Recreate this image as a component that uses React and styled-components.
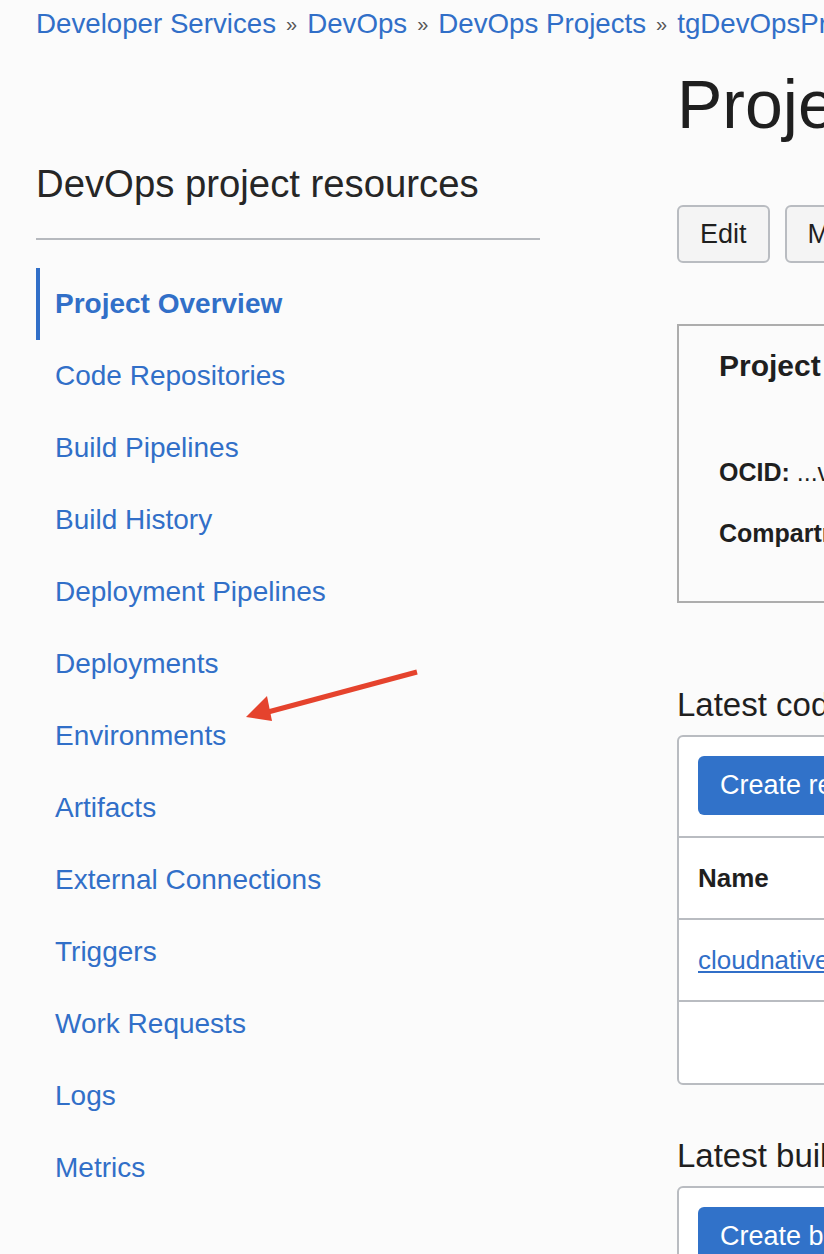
import React from "react";
import styled, { createGlobalStyle } from "styled-components";

const GlobalStyle = createGlobalStyle`
  html, body {
    margin: 0;
    padding: 0;
    background: #fbfbfb;
    overflow: hidden;
  }
  body {
    font-family: "Liberation Sans", Arial, sans-serif;
    color: #1f1f1f;
  }
`;

const navItems = [
  "Project Overview",
  "Code Repositories",
  "Build Pipelines",
  "Build History",
  "Deployment Pipelines",
  "Deployments",
  "Environments",
  "Artifacts",
  "External Connections",
  "Triggers",
  "Work Requests",
  "Logs",
  "Metrics",
];

const crumbs = ["Developer Services", "DevOps", "DevOps Projects", "tgDevOpsProject"];

export default function App() {
  return (
    <>
      <GlobalStyle />
      <Page>
        <Breadcrumbs>
          {crumbs.map((c, i) => (
            <React.Fragment key={c}>
              {i > 0 && <Sep>»</Sep>}
              <Crumb href="#">{c}</Crumb>
            </React.Fragment>
          ))}
        </Breadcrumbs>

        <Columns>
          <Sidebar>
            <SideTitle>DevOps project resources</SideTitle>
            <Divider />
            <Nav>
              {navItems.map((item, i) => (
                <NavItem key={item} $active={i === 0}>
                  <a href="#">{item}</a>
                </NavItem>
              ))}
            </Nav>
          </Sidebar>

          <Main>
            <PageTitle>Project Overview</PageTitle>
            <Actions>
              <Button>Edit</Button>
              <Button>Move resource</Button>
              <Button>Add tags</Button>
            </Actions>

            <InfoCard>
              <InfoTitle>Project information</InfoTitle>
              <InfoLine>
                <b>OCID:</b> ...vq7a5a <CopyLink>Show</CopyLink>
              </InfoLine>
              <InfoLine>
                <b>Compartment:</b> tgdevops
              </InfoLine>
            </InfoCard>

            <SectionTitle>Latest code repositories</SectionTitle>
            <TableCard>
              <Toolbar>
                <PrimaryButton>Create repository</PrimaryButton>
              </Toolbar>
              <Row $head>Name</Row>
              <Row>
                <TableLink href="#">cloudnative-helidon-storefront</TableLink>
              </Row>
              <EmptyRow />
            </TableCard>

            <SectionTitle $top={51}>Latest build pipelines</SectionTitle>
            <TableCard>
              <Toolbar>
                <PrimaryButton>Create build pipeline</PrimaryButton>
              </Toolbar>
            </TableCard>
          </Main>
        </Columns>

        <Arrow width="176" height="60" viewBox="0 0 176 60">
          <line x1="171" y1="9" x2="22" y2="49" stroke="#e5432d" strokeWidth="5" />
          <polygon points="0,54 21,33 26,58" fill="#e5432d" />
        </Arrow>
      </Page>
    </>
  );
}

const Page = styled.div`
  position: relative;
  width: 1400px;
  padding: 9px 0 0 36px;
`;

const Breadcrumbs = styled.div`
  display: flex;
  align-items: center;
  gap: 10px;
  font-size: 27.7px;
  line-height: 30px;
  white-space: nowrap;
`;

const Crumb = styled.a`
  color: #316fc8;
  text-decoration: none;
`;

const Sep = styled.span`
  color: #555;
  font-size: 20px;
`;

const Columns = styled.div`
  display: flex;
  gap: 137px;
`;

const Sidebar = styled.div`
  width: 504px;
  flex-shrink: 0;
  padding-top: 122px;
`;

const SideTitle = styled.h2`
  margin: 0;
  font-size: 38.3px;
  font-weight: 400;
  line-height: 46px;
  color: #262626;
`;

const Divider = styled.hr`
  border: 0;
  border-top: 2px solid #b6b9be;
  margin: 31px 0 28px;
`;

const Nav = styled.ul`
  list-style: none;
  margin: 0;
  padding: 0;
`;

const NavItem = styled.li`
  height: 72px;
  display: flex;
  align-items: center;
  padding-left: ${(p) => (p.$active ? "15px" : "19px")};
  border-left: ${(p) => (p.$active ? "4px solid #316fc8" : "0")};
  font-size: 28px;

  a {
    color: #316fc8;
    text-decoration: none;
    font-weight: ${(p) => (p.$active ? 700 : 400)};
  }
`;

const Main = styled.div`
  width: 720px;
  flex-shrink: 0;
  display: flex;
  flex-direction: column;
  align-items: flex-start;
`;

const PageTitle = styled.h1`
  margin: 24px 0 0;
  font-size: 68px;
  font-weight: 400;
  line-height: 82px;
  color: #1f1f1f;
  white-space: nowrap;
`;

const Actions = styled.div`
  display: flex;
  gap: 15px;
  margin-top: 60px;
`;

const Button = styled.button`
  height: 58px;
  padding: 0 21px;
  border: 2px solid #b9bcc1;
  border-radius: 6px;
  background: #f4f4f4;
  font-family: inherit;
  font-size: 27px;
  color: #1f1f1f;
`;

const InfoCard = styled.div`
  align-self: stretch;
  margin-top: 61px;
  height: 279px;
  box-sizing: border-box;
  border: 2px solid #adadad;
  padding: 20px 40px;
`;

const InfoTitle = styled.div`
  font-size: 30px;
  font-weight: 700;
  line-height: 40px;
  margin-bottom: 69px;
  white-space: nowrap;
`;

const InfoLine = styled.div`
  font-size: 25px;
  line-height: 34px;
  margin-bottom: 27px;
  white-space: nowrap;
`;

const CopyLink = styled.a`
  color: #316fc8;
  margin-left: 8px;
`;

const SectionTitle = styled.h3`
  margin: ${(p) => p.$top ?? 82}px 0 10px;
  font-size: 33px;
  font-weight: 400;
  line-height: 40px;
  white-space: nowrap;
`;

const TableCard = styled.div`
  align-self: stretch;
  border: 2px solid #b9bcc1;
  border-radius: 6px;
  background: #fff;
`;

const Toolbar = styled.div`
  padding: 19px 19px 21px;
  border-bottom: 2px solid #b9bcc1;
`;

const PrimaryButton = styled.button`
  height: 59px;
  padding: 0 22px;
  border: 0;
  border-radius: 6px;
  background: #3172c9;
  color: #fff;
  font-family: inherit;
  font-size: 27px;
`;

const Row = styled.div`
  height: 80px;
  display: flex;
  align-items: center;
  padding-left: 19px;
  border-bottom: 2px solid #b9bcc1;
  font-size: 26px;
  font-weight: ${(p) => (p.$head ? 700 : 400)};
`;

const TableLink = styled.a`
  color: #316fc8;
  text-decoration: underline;
`;

const EmptyRow = styled.div`
  height: 81px;
`;

const Arrow = styled.svg`
  position: absolute;
  left: 246px;
  top: 663px;
`;
